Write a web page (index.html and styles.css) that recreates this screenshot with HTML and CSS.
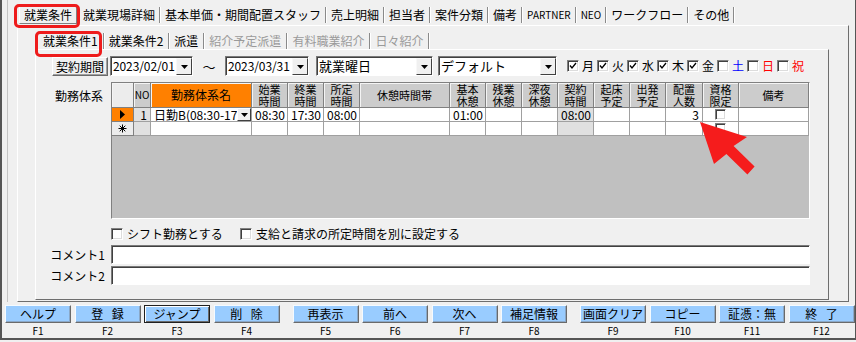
FILE: index.html
```html
<!DOCTYPE html>
<html>
    <head>
        <meta charset="utf-8">
        <title>就業条件</title>
        <link rel="stylesheet" href="styles.css">
    </head>
    <body>
        <div class="window">
            <div class="frame">
                <div class="main-tabs">
                    <span class="tab active">就業条件</span>
                    <span class="tab">就業現場詳細</span>
                    <span class="tab">基本単価・期間配置スタッフ</span>
                    <span class="tab">売上明細</span>
                    <span class="tab">担当者</span>
                    <span class="tab">案件分類</span>
                    <span class="tab">備考</span>
                    <span class="tab latin">PARTNER</span>
                    <span class="tab latin">NEO</span>
                    <span class="tab">ワークフロー</span>
                    <span class="tab">その他</span>
                </div>
                <div class="page">
                    <div class="sub-tabs">
                        <span class="stab active">就業条件1</span>
                        <span class="stab">就業条件2</span>
                        <span class="stab">派遣</span>
                        <span class="stab off">紹介予定派遣</span>
                        <span class="stab off">有料職業紹介</span>
                        <span class="stab off">日々紹介</span>
                    </div>
                    <div class="inner">
                        <div class="period-row">
                            <button class="plain-btn">契約期間</button>
                            <div class="combo w-date1"><span class="val digits">2023/02/01</span><span class="drop"><svg width="7" height="4"><path d="M0 0h7L3.5 4z"/></svg></span></div>
                            <span class="tilde">～</span>
                            <div class="combo w-date2"><span class="val digits">2023/03/31</span><span class="drop"><svg width="7" height="4"><path d="M0 0h7L3.5 4z"/></svg></span></div>
                            <div class="combo w-kind"><span class="val">就業曜日</span><span class="drop"><svg width="7" height="4"><path d="M0 0h7L3.5 4z"/></svg></span></div>
                            <div class="combo w-pattern"><span class="val">デフォルト</span><span class="drop"><svg width="7" height="4"><path d="M0 0h7L3.5 4z"/></svg></span></div>
                            <div class="days">
                                <span class="day"><span class="chk"><svg width="8" height="8"><path d="M1 3.5l2 2.5 4-5" fill="none" stroke="#000" stroke-width="1.3"/></svg></span>月</span>
                                <span class="day"><span class="chk"><svg width="8" height="8"><path d="M1 3.5l2 2.5 4-5" fill="none" stroke="#000" stroke-width="1.3"/></svg></span>火</span>
                                <span class="day"><span class="chk"><svg width="8" height="8"><path d="M1 3.5l2 2.5 4-5" fill="none" stroke="#000" stroke-width="1.3"/></svg></span>水</span>
                                <span class="day"><span class="chk"><svg width="8" height="8"><path d="M1 3.5l2 2.5 4-5" fill="none" stroke="#000" stroke-width="1.3"/></svg></span>木</span>
                                <span class="day"><span class="chk"><svg width="8" height="8"><path d="M1 3.5l2 2.5 4-5" fill="none" stroke="#000" stroke-width="1.3"/></svg></span>金</span>
                                <span class="day sat"><span class="chk"></span>土</span>
                                <span class="day sun"><span class="chk"></span>日</span>
                                <span class="day sun"><span class="chk"></span>祝</span>
                            </div>
                        </div>

                        <div class="grid-row">
                            <div class="row-label">勤務体系</div>
                            <div class="grid">
                                <div class="cell hd sel"></div>
                                <div class="cell hd small">NO</div>
                                <div class="cell hd orange">勤務体系名</div>
                                <div class="cell hd">始業<br>時間</div>
                                <div class="cell hd">終業<br>時間</div>
                                <div class="cell hd">所定<br>時間</div>
                                <div class="cell hd">休憩時間帯</div>
                                <div class="cell hd">基本<br>休憩</div>
                                <div class="cell hd">残業<br>休憩</div>
                                <div class="cell hd">深夜<br>休憩</div>
                                <div class="cell hd">契約<br>時間</div>
                                <div class="cell hd">起床<br>予定</div>
                                <div class="cell hd">出発<br>予定</div>
                                <div class="cell hd">配置<br>人数</div>
                                <div class="cell hd">資格<br>限定</div>
                                <div class="cell hd">備考</div>

                                <div class="cell selector current"><svg width="5" height="9"><path d="M0 0L5 4.5 0 9z"/></svg></div>
                                <div class="cell grey num">1</div>
                                <div class="cell name"><span class="txt">日勤B(08:30-17</span><span class="mini-drop"><svg width="7" height="4"><path d="M0 0h7L3.5 4z"/></svg></span></div>
                                <div class="cell">08:30</div>
                                <div class="cell">17:30</div>
                                <div class="cell">08:00</div>
                                <div class="cell"></div>
                                <div class="cell">01:00</div>
                                <div class="cell"></div>
                                <div class="cell"></div>
                                <div class="cell grey">08:00</div>
                                <div class="cell"></div>
                                <div class="cell"></div>
                                <div class="cell num">3</div>
                                <div class="cell center"><span class="chk"></span></div>
                                <div class="cell"></div>

                                <div class="cell selector"><svg width="9" height="9"><path d="M4.5 0.5v8M0.5 4.5h8M1.7 1.7l5.6 5.6M7.3 1.7l-5.6 5.6" stroke="#000" stroke-width="1"/></svg></div>
                                <div class="cell grey"></div>
                                <div class="cell"></div>
                                <div class="cell"></div>
                                <div class="cell"></div>
                                <div class="cell"></div>
                                <div class="cell"></div>
                                <div class="cell"></div>
                                <div class="cell"></div>
                                <div class="cell"></div>
                                <div class="cell grey"></div>
                                <div class="cell"></div>
                                <div class="cell"></div>
                                <div class="cell"></div>
                                <div class="cell center"><span class="chk"></span></div>
                                <div class="cell"></div>
                            </div>
                        </div>

                        <div class="opt-row">
                            <span class="opt first"><span class="chk"></span>シフト勤務とする</span>
                            <span class="opt"><span class="chk"></span>支給と請求の所定時間を別に設定する</span>
                        </div>

                        <div class="comment-row">
                            <div class="comment-label">コメント1</div>
                            <div class="text-box"></div>
                        </div>
                        <div class="comment-row second">
                            <div class="comment-label">コメント2</div>
                            <div class="text-box"></div>
                        </div>
                    </div>
                </div>
            </div>

            <div class="fkeys">
                <div class="group">
                    <div class="fk"><button>ヘルプ</button><span class="key">F1</span></div>
                    <div class="fk"><button class="wide">登 録</button><span class="key">F2</span></div>
                    <div class="fk"><button class="jump">ジャンプ</button><span class="key">F3</span></div>
                    <div class="fk"><button class="wide">削 除</button><span class="key">F4</span></div>
                </div>
                <div class="group">
                    <div class="fk"><button>再表示</button><span class="key">F5</span></div>
                    <div class="fk"><button>前へ</button><span class="key">F6</span></div>
                    <div class="fk"><button>次へ</button><span class="key">F7</span></div>
                    <div class="fk"><button>補足情報</button><span class="key">F8</span></div>
                </div>
                <div class="group">
                    <div class="fk"><button>画面クリア</button><span class="key">F9</span></div>
                    <div class="fk"><button>コピー</button><span class="key">F10</span></div>
                    <div class="fk"><button>証憑：無</button><span class="key">F11</span></div>
                    <div class="fk"><button class="wide">終 了</button><span class="key">F12</span></div>
                </div>
            </div>

            <!-- annotations drawn over the form -->
            <div class="mark mark-tab"></div>
            <div class="mark mark-subtab"></div>
            <svg class="arrow" width="66" height="60">
                <path d="M5 4L52 19 38.6 28.1 59.6 48.6 52.4 56.4 31.4 35.9 19 46z" fill="#f51c1c"/>
            </svg>
        </div>
    </body>
</html>
```

FILE: styles.css
```css
* {
    box-sizing: border-box;
}

body {
    margin: 0;
    background: #f0f0f0;
    font-family: "Noto Sans CJK JP", sans-serif;
    font-size: 12px;
    color: #000;
}

.window {
    position: relative;
    width: 856px;
    height: 340px;
    border-left: 2px solid #555;
    border-right: 1px solid #555;
    border-bottom: 2px solid #555;
    overflow: hidden;
}

.frame {
    margin-left: 5px;
    height: 302px;
    border-left: 1px solid #c4c4c4;
}

/* top tab strip */
.main-tabs {
    display: flex;
    align-items: center;
    height: 25px;
    padding: 4px 0 0 11px;
}

.tab {
    height: 16px;
    line-height: 15px;
    padding: 0 4px 0 5px;
    border-right: 1px solid #8a8a8a;
    box-shadow: 1px 0 0 #fff;
    white-space: nowrap;
}

.tab.active {
    height: 18px;
    line-height: 16px;
    padding: 0 4px;
    margin-right: 1px;
    border: 1px solid;
    border-color: #fff #808080 #808080 #fff;
    box-shadow: none;
}

.tab.latin {
    font-size: 10px;
}

.page {
    margin-left: 9px;
    width: 832px;
    height: 277px;
    border: 1px solid;
    border-color: #fff #6e6e6e #6e6e6e #fff;
}

.sub-tabs {
    display: flex;
    height: 23px;
    padding: 7px 0 0 20px;
}

.stab {
    height: 16px;
    line-height: 15px;
    padding: 0 5px;
    border-right: 1px solid #8a8a8a;
    box-shadow: 1px 0 0 #fff;
    white-space: nowrap;
}

.stab.off {
    color: #9a9a9a;
}

.inner {
    margin-left: 17px;
    width: 794px;
    height: 251px;
    border: 1px solid;
    border-color: #fff #6e6e6e #6e6e6e #fff;
    padding-top: 6px;
}

/* contract period row */
.period-row {
    display: flex;
    align-items: center;
    height: 20px;
    padding-left: 16px;
}

.plain-btn {
    width: 56px;
    height: 19px;
    margin-right: 2px;
    padding: 0;
    color: #000;
    font-family: inherit;
    font-size: 12px;
    background: #f0f0f0;
    border: 1px solid;
    border-color: #fff #6a6a6a #6a6a6a #fff;
    box-shadow: inset -1px -1px #a0a0a0;
}

.combo {
    display: flex;
    height: 20px;
    background: #fff;
    border: 1px solid;
    border-color: #7a7a7a #fff #fff #7a7a7a;
    box-shadow: inset 1px 1px #404040;
    font-size: 13px;
    line-height: 18px;
}

.combo .val {
    flex: 1;
    padding-left: 2px;
    overflow: hidden;
    white-space: nowrap;
}

.combo .val.digits {
    font-size: 12px;
    letter-spacing: -0.1px;
}

.combo .drop {
    width: 16px;
    margin: 1px 0 0 0;
    display: flex;
    align-items: center;
    justify-content: center;
    background: #f0f0f0;
    border: 1px solid;
    border-color: #f8f8f8 #404040 #404040 #f8f8f8;
}

.w-date1 { width: 83px; }
.w-date2 { width: 84px; margin-right: 7px; }
.w-kind { width: 117px; margin-right: 5px; }
.w-pattern { width: 119px; margin-right: 10px; }

.tilde {
    width: 32px;
    text-align: center;
    font-size: 13px;
}

.days {
    display: flex;
}

.day {
    display: flex;
    align-items: center;
    width: 30px;
    font-size: 12px;
    line-height: 16px;
}

.day .chk {
    margin-right: 3px;
}

.day.sat { color: #0000ff; }
.day.sun { color: #ff0000; }

.chk {
    display: inline-flex;
    align-items: center;
    justify-content: center;
    width: 12px;
    height: 12px;
    flex: none;
    background: #fff;
    border: 1px solid;
    border-color: #808080 #fff #fff #808080;
    box-shadow: inset 1px 1px #404040, inset -1px -1px #dcdcdc;
}

/* data sheet */
.grid-row {
    display: flex;
    margin-top: 6px;
}

.row-label {
    width: 75px;
    padding: 7px 8px 0 0;
    text-align: right;
    line-height: 14px;
}

.grid {
    width: 699px;
    height: 137px;
    display: grid;
    grid-template-columns: 22px 17px 101px 36px 36px 36px 90px 36px 36px 36px 36px 36px 36px 37px 36px 1fr;
    grid-template-rows: 25px 14px 14px;
    align-content: start;
    background: #c0c0c0;
    border: 1px solid;
    border-color: #808080 #fff #fff #808080;
}

.cell {
    background: #fff;
    border-right: 1px solid #a0a0a0;
    border-bottom: 1px solid #a0a0a0;
    padding: 0 3px;
    font-size: 12px;
    line-height: 13px;
    white-space: nowrap;
}

.hd {
    display: flex;
    align-items: center;
    justify-content: center;
    padding: 0;
    text-align: center;
    font-size: 11px;
    line-height: 12px;
    background: #cccccc;
    border-color: #808080;
    box-shadow: inset 1px 1px #f4f4f4;
}

.hd.orange {
    font-size: 12px;
    background: #ff8000;
}

.hd.small { font-size: 10px; }
.hd.sel { background: #ececec; }

.selector {
    display: flex;
    align-items: center;
    justify-content: center;
    padding: 0;
    background: #ececec;
    border-color: #808080;
}

.selector.current { background: #ff8000; }

.grey { background: #e0e0e0; }
.num { text-align: right; }

.center {
    display: flex;
    align-items: center;
    justify-content: center;
}

.center .chk {
    width: 11px;
    height: 11px;
}

.name {
    display: flex;
    padding: 0 0 0 3px;
}

.name .txt {
    flex: 1;
}

.mini-drop {
    width: 14px;
    display: flex;
    align-items: center;
    justify-content: center;
    background: #f0f0f0;
    border: 1px solid;
    border-color: #fff #404040 #404040 #fff;
}

/* options and comments */
.opt-row {
    display: flex;
    align-items: center;
    height: 15px;
    margin-top: 7px;
    padding-left: 75px;
}

.opt {
    display: flex;
    align-items: center;
    line-height: 14px;
}

.opt.first {
    width: 129px;
}

.opt .chk {
    margin-right: 4px;
}

.comment-row {
    display: flex;
    height: 19px;
    margin-top: 4px;
}

.comment-row.second {
    margin-top: 2px;
}

.comment-label {
    width: 75px;
    padding-right: 6px;
    text-align: right;
    line-height: 19px;
}

.text-box {
    width: 699px;
    background: #fff;
    border: 1px solid;
    border-color: #7a7a7a #fff #fff #7a7a7a;
    box-shadow: inset 1px 1px #404040;
}

/* function keys */
.fkeys {
    display: flex;
    gap: 13px;
    margin-top: 3px;
    padding-left: 3px;
}

.group {
    display: grid;
    grid-template-columns: repeat(4, 66px);
    column-gap: 3.5px;
}

.fk {
    display: flex;
    flex-direction: column;
    align-items: center;
}

.fk button {
    width: 66px;
    height: 18px;
    padding: 0;
    color: #000;
    font-family: inherit;
    font-size: 12px;
    line-height: 14px;
    background: #99ccff;
    border: 1px solid;
    border-color: #f4faff #6a6a6a #6a6a6a #f4faff;
    box-shadow: inset -1px -1px #8aa8c8;
}

.fk button.wide {
    word-spacing: 6px;
}

.fk button.jump {
    border-color: #202020;
    box-shadow: inset 1px 1px #fff, inset -1px -1px #6a6a6a;
}

.fk .key {
    margin-top: 2px;
    font-size: 10px;
    line-height: 12px;
}

/* red annotations */
.mark {
    position: absolute;
    border: 3px solid #ee1c1c;
    border-radius: 5px;
}

.mark-tab {
    left: 12px;
    top: 4px;
    width: 66px;
    height: 24px;
}

.mark-subtab {
    left: 33px;
    top: 31px;
    width: 67px;
    height: 26px;
}

.arrow {
    position: absolute;
    left: 693px;
    top: 118px;
}
```
